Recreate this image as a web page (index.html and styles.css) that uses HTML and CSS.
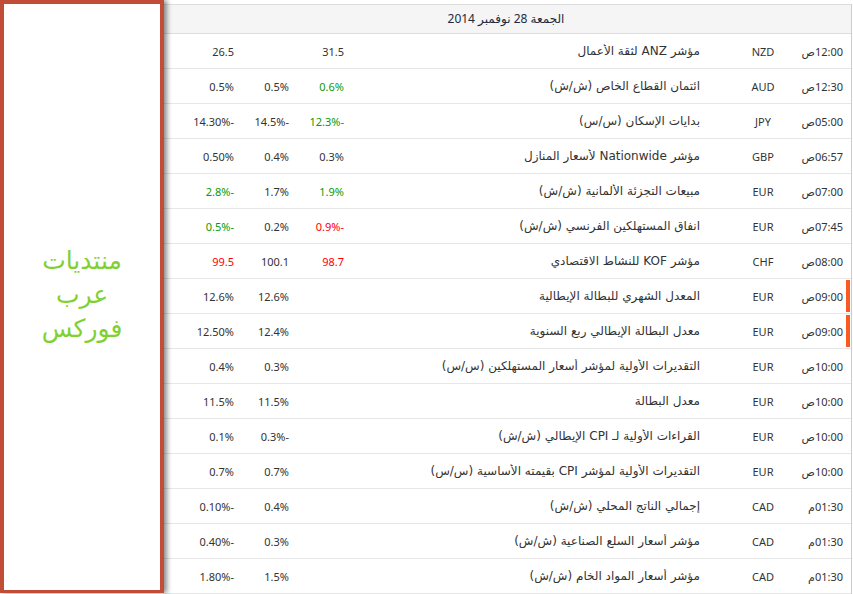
FILE: index.html
```html
<!DOCTYPE html>
<html lang="ar">
<head>
<meta charset="utf-8">
<title>Calendar</title>
<link rel="stylesheet" href="styles.css">
</head>
<body>
<div class="page">
  <aside class="promo">
    <div class="promo-text">منتديات<br>عرب<br>فوركس</div>
  </aside>
  <main class="cal" dir="rtl">
    <div class="cal-head">الجمعة 28 نوفمبر 2014</div>
    <div class="row"><span class="c-time">12:00ص</span><span class="c-cur">NZD</span><span class="c-ev">مؤشر ANZ لثقة الأعمال</span><span class="c-num">31.5</span><span class="c-num"></span><span class="c-num">26.5</span></div>
    <div class="row"><span class="c-time">12:30ص</span><span class="c-cur">AUD</span><span class="c-ev">ائتمان القطاع الخاص (ش/ش)</span><span class="c-num up">0.6%</span><span class="c-num">0.5%</span><span class="c-num">0.5%</span></div>
    <div class="row"><span class="c-time">05:00ص</span><span class="c-cur">JPY</span><span class="c-ev">بدايات الإسكان (س/س)</span><span class="c-num up">-12.3%</span><span class="c-num">-14.5%</span><span class="c-num">-14.30%</span></div>
    <div class="row"><span class="c-time">06:57ص</span><span class="c-cur">GBP</span><span class="c-ev">مؤشر Nationwide لأسعار المنازل</span><span class="c-num">0.3%</span><span class="c-num">0.4%</span><span class="c-num">0.50%</span></div>
    <div class="row"><span class="c-time">07:00ص</span><span class="c-cur">EUR</span><span class="c-ev">مبيعات التجزئة الألمانية (ش/ش)</span><span class="c-num up">1.9%</span><span class="c-num">1.7%</span><span class="c-num up">-2.8%</span></div>
    <div class="row"><span class="c-time">07:45ص</span><span class="c-cur">EUR</span><span class="c-ev">انفاق المستهلكين الفرنسي (ش/ش)</span><span class="c-num down">-0.9%</span><span class="c-num">0.2%</span><span class="c-num up">-0.5%</span></div>
    <div class="row"><span class="c-time">08:00ص</span><span class="c-cur">CHF</span><span class="c-ev">مؤشر KOF للنشاط الاقتصادي</span><span class="c-num down">98.7</span><span class="c-num">100.1</span><span class="c-num down">99.5</span></div>
    <div class="row marked"><span class="c-time">09:00ص</span><span class="c-cur">EUR</span><span class="c-ev">المعدل الشهري للبطالة الإيطالية</span><span class="c-num"></span><span class="c-num">12.6%</span><span class="c-num">12.6%</span></div>
    <div class="row marked"><span class="c-time">09:00ص</span><span class="c-cur">EUR</span><span class="c-ev">معدل البطالة الإيطالي ربع السنوية</span><span class="c-num"></span><span class="c-num">12.4%</span><span class="c-num">12.50%</span></div>
    <div class="row"><span class="c-time">10:00ص</span><span class="c-cur">EUR</span><span class="c-ev">التقديرات الأولية لمؤشر أسعار المستهلكين (س/س)</span><span class="c-num"></span><span class="c-num">0.3%</span><span class="c-num">0.4%</span></div>
    <div class="row"><span class="c-time">10:00ص</span><span class="c-cur">EUR</span><span class="c-ev">معدل البطالة</span><span class="c-num"></span><span class="c-num">11.5%</span><span class="c-num">11.5%</span></div>
    <div class="row"><span class="c-time">10:00ص</span><span class="c-cur">EUR</span><span class="c-ev">القراءات الأولية لـ CPI الإيطالي (ش/ش)</span><span class="c-num"></span><span class="c-num">-0.3%</span><span class="c-num">0.1%</span></div>
    <div class="row"><span class="c-time">10:00ص</span><span class="c-cur">EUR</span><span class="c-ev">التقديرات الأولية لمؤشر CPI بقيمته الأساسية (س/س)</span><span class="c-num"></span><span class="c-num">0.7%</span><span class="c-num">0.7%</span></div>
    <div class="row"><span class="c-time">01:30م</span><span class="c-cur">CAD</span><span class="c-ev">إجمالي الناتج المحلي (ش/ش)</span><span class="c-num"></span><span class="c-num">0.4%</span><span class="c-num">-0.10%</span></div>
    <div class="row"><span class="c-time">01:30م</span><span class="c-cur">CAD</span><span class="c-ev">مؤشر أسعار السلع الصناعية (ش/ش)</span><span class="c-num"></span><span class="c-num">0.3%</span><span class="c-num">-0.40%</span></div>
    <div class="row"><span class="c-time">01:30م</span><span class="c-cur">CAD</span><span class="c-ev">مؤشر أسعار المواد الخام (ش/ش)</span><span class="c-num"></span><span class="c-num">1.5%</span><span class="c-num">-1.80%</span></div>
  </main>
</div>
</body>
</html>
```
FILE: styles.css
```css
html, body {
  margin: 0;
  padding: 0;
  background: #ffffff;
}
body {
  width: 853px;
  height: 594px;
  overflow: hidden;
  font-family: "Noto Sans", "DejaVu Sans", sans-serif;
  font-size: 11px;
  color: #333333;
}
.page {
  display: flex;
  align-items: flex-start;
}
.promo {
  position: relative;
  z-index: 2;
  flex: 0 0 auto;
  box-sizing: border-box;
  width: 164px;
  height: 593px;
  border: 4px solid #c24d36;
  border-bottom-width: 3px;
  background: #ffffff;
  box-shadow: 3px 0 5px rgba(0, 0, 0, 0.45);
  display: flex;
  align-items: center;
  justify-content: center;
}
.promo-text {
  font-family: "DejaVu Sans", sans-serif;
  font-size: 25px;
  line-height: 34px;
  color: #7fd133;
  text-align: center;
  margin-top: -4px;
}
.cal {
  flex: 0 0 auto;
  box-sizing: border-box;
  width: 688px;
  margin-top: 4px;
  border-top: 1px solid #dddddd;
  border-right: 1px solid #cccccc;
}
.cal-head {
  height: 28px;
  line-height: 28px;
  background: #f5f5f5;
  border-bottom: 1px solid #dddddd;
  text-align: center;
  font-size: 12px;
  color: #1e2b3b;
  padding-right: 3px;
}
.row {
  position: relative;
  display: grid;
  grid-template-columns: 58px 60px 389px 55px 55px 55px 1fr;
  height: 34px;
  align-items: center;
  border-bottom: 1px solid #e6e6e6;
}
.row > span {
  white-space: nowrap;
}
.c-time {
  text-align: right;
  padding-right: 8px;
}
.c-cur {
  text-align: center;
}
.c-ev {
  font-family: "DejaVu Sans", sans-serif;
  font-size: 12px;
  text-align: right;
  padding-right: 33px;
  overflow: hidden;
}
.c-num {
  text-align: right;
}
.up {
  color: #0a9a0a;
}
.down {
  color: #ff0000;
}
.marked::after {
  content: "";
  position: absolute;
  right: 1px;
  top: 1px;
  bottom: 1px;
  width: 4px;
  background: #fa5a20;
}
```
